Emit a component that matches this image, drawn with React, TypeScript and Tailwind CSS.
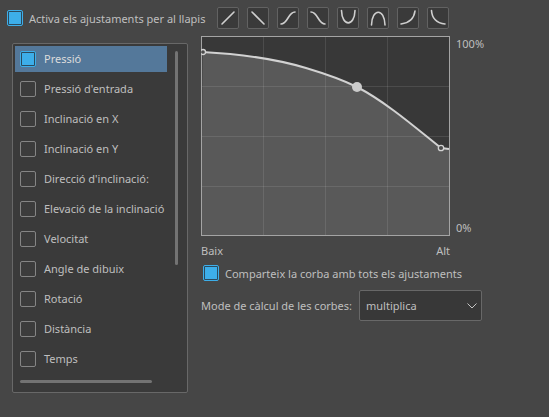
const font = { fontFamily: '"Noto Sans", sans-serif' };

function Check({ on = false }: { on?: boolean }) {
  return (
    <span
      className={`flex h-[16px] w-[16px] shrink-0 items-center justify-center rounded-[2px] border ${
        on ? "border-[#3daee9] bg-[#2b4a5e]" : "border-[#858585] bg-[#3c3c3c]"
      }`}
    >
      {on && <span className="block h-[12px] w-[12px] bg-[#3daee9]" />}
    </span>
  );
}

const presets = [
  "M5 17 L17 5",
  "M5 5 L17 17",
  "M4 17 C11 17 11 5 18 5",
  "M4 5 C11 5 11 17 18 17",
  "M4.5 3.5 C5 20 17.5 20 18 3.5",
  "M4.5 18 C5 1 17.5 1 18 18",
  "M4 17 C12 16 17 12 18 4",
  "M4.5 3.5 C5 12 10 16 18 17",
];

const rows = [
  "Pressió",
  "Pressió d'entrada",
  "Inclinació en X",
  "Inclinació en Y",
  "Direcció d'inclinació:",
  "Elevació de la inclinació",
  "Velocitat",
  "Angle de dibuix",
  "Rotació",
  "Distància",
  "Temps",
];

function Chart() {
  const curve =
    "M1.5 16 C40 18 75 23 105 32 C125 38 142 44 156 51 C185 66 215 92 240 112 L248 113";
  return (
    <svg width="249" height="200" viewBox="0 0 249 200" className="block shrink-0">
      <rect x="0" y="0" width="249" height="200" fill="#383838" />
      <path d={`${curve} L248 199.5 L0.5 199.5 Z`} fill="#595959" />
      <g stroke="#ffffff" strokeOpacity="0.1" strokeWidth="1">
        <path d="M62.5 0V200M124.5 0V200M186.5 0V200M0 50.5H249M0 100.5H249M0 150.5H249" />
      </g>
      <rect x="0.5" y="0.5" width="248" height="199" fill="none" stroke="#a4a4a4" />
      <path d={curve} fill="none" stroke="#d2d2d2" strokeWidth="2" />
      <circle cx="156" cy="51" r="5" fill="#cbcbcb" />
      <circle cx="2" cy="16" r="2.5" fill="#4a4a4a" stroke="#d2d2d2" strokeWidth="1.3" />
      <circle cx="240" cy="112" r="2.7" fill="#4a4a4a" stroke="#d2d2d2" strokeWidth="1.3" />
    </svg>
  );
}

export default function App() {
  return (
    <div
      style={font}
      className="flex h-[417px] w-[549px] flex-col overflow-hidden bg-[#464646] text-[11px] leading-[15px] text-[#bfbfbf]"
    >
      <div className="flex pt-[7px]">
        <label className="flex h-[22px] w-[217px] items-center pl-[7px]">
          <Check on />
          <span className="ml-[6px] whitespace-nowrap">Activa els ajustaments per al llapis</span>
        </label>
        <div className="flex gap-[8px]">
          {presets.map((d) => (
            <button
              key={d}
              className="flex h-[22px] w-[22px] items-center justify-center rounded-[2px] border border-[#626262] bg-[#3a3a3a]"
            >
              <svg width="22" height="22" viewBox="0 0 22 22" className="shrink-0">
                <path d={d} fill="none" stroke="#cfcfcf" strokeWidth="1.6" strokeLinecap="round" />
              </svg>
            </button>
          ))}
        </div>
      </div>

      <div className="mt-[7px] flex">
        <div className="ml-[12px] mt-[7px] flex h-[350px] w-[176px] flex-col rounded-[2px] border border-[#686868] bg-[#3a3a3a] pl-[2px] pt-[2px]">
          <div className="flex items-start">
            <ul className="flex w-[152px] flex-col gap-[4px]">
              {rows.map((r, i) => (
                <li
                  key={r}
                  className={`flex h-[26px] items-center pl-[5px] ${i === 0 ? "bg-[#54789a] text-[#dcdcdc]" : ""}`}
                >
                  <Check on={i === 0} />
                  <span className="mb-[2px] ml-[8px] whitespace-nowrap">{r}</span>
                </li>
              ))}
            </ul>
            <div className="ml-[8px] mt-[5px] h-[214px] w-[3px] rounded-full bg-[#737373]" />
          </div>
          <div className="ml-[5px] mt-[8px] h-[3px] w-[132px] rounded-full bg-[#737373]" />
        </div>

        <div className="ml-[13px] flex flex-col">
          <div className="flex">
            <Chart />
            <div className="ml-[6px] flex h-[200px] flex-col justify-between pb-[1px]">
              <span>100%</span>
              <span>0%</span>
            </div>
          </div>
          <div className="mt-[7px] flex w-[249px] justify-between">
            <span>Baix</span>
            <span>Alt</span>
          </div>
          <label className="mt-[7px] flex items-center pl-[2px]">
            <Check on />
            <span className="ml-[6px] whitespace-nowrap">Comparteix la corba amb tots els ajustaments</span>
          </label>
          <div className="mt-[9px] flex items-center">
            <span className="w-[158px] whitespace-nowrap">Mode de càlcul de les corbes:</span>
            <div className="flex h-[31px] w-[123px] items-center justify-between rounded-[2px] border border-[#686868] bg-[#383838] pl-[6px] pr-[4px]">
              <span>multiplica</span>
              <svg width="10" height="6" viewBox="0 0 10 6">
                <path d="M0.5 0.5 L5 5 L9.5 0.5" fill="none" stroke="#c4c4c4" strokeWidth="1" />
              </svg>
            </div>
          </div>
        </div>
      </div>
    </div>
  );
}
